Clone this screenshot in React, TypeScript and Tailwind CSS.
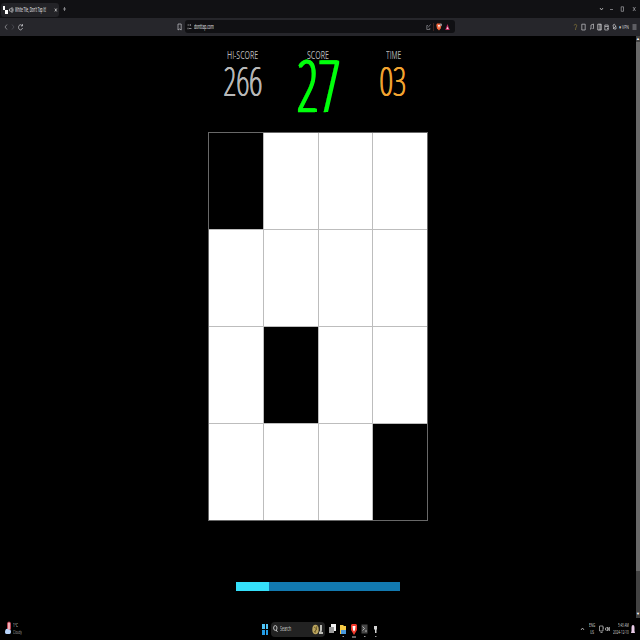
import { useLayoutEffect, useRef, useState } from "react";
import type { ReactNode } from "react";

// A single line of text condensed or stretched to an exact width.
function Fit({ w, className = "", children }: { w: number; className?: string; children: ReactNode }) {
  const ref = useRef<HTMLSpanElement>(null);
  const [s, setS] = useState(1);
  useLayoutEffect(() => {
    if (ref.current) setS(w / ref.current.offsetWidth);
  }, [w]);
  return (
    <span className={`block shrink-0 ${className}`} style={{ width: w }}>
      <span ref={ref} className="inline-block origin-left whitespace-nowrap" style={{ transform: `scaleX(${s})` }}>
        {children}
      </span>
    </span>
  );
}

function Icon({ d, w = 5, color = "#a3a3a8", fill = "none", className = "" }: { d: string; w?: number; color?: string; fill?: string; className?: string }) {
  return (
    <svg width={w} height="8" viewBox={`0 0 ${w} 8`} fill={fill} stroke={color} strokeWidth="0.7" className={`shrink-0 ${className}`}>
      <path d={d} />
    </svg>
  );
}

function TabBar() {
  return (
    <div className="flex h-[18px] items-center bg-[#111114]">
      <div className="ml-px mt-px flex h-[14px] w-[58px] items-center rounded-[3px] bg-[#232327]">
        <svg width="5" height="8" viewBox="0 0 5 8" className="ml-[2px]">
          <path d="M0 0h2v4H0zM2 4h3v4H2z" fill="#fff" />
        </svg>
        <Icon d="M0.5 3h1l1.5-1.500v5L1.500 5h-1zM4 2.500v3" w={5} color="#ddd" className="ml-[1px]" />
        <Fit w={31} className="ml-px text-[6.5px] font-medium leading-[8px] text-[#f4f4f6]">White Tile, Don't Tap It!</Fit>
        <Icon d="M0.800 2.500l2 3M2.800 2.500l-2 3" w={4} className="ml-[8px]" color="#ddd" />
      </div>
      <Icon d="M2.500 2v4M1 4h3" className="ml-[3px]" />
      <div className="ml-auto flex pr-[3px]">
        <Icon d="M1 3l1.500 2 1.500-2" className="mr-[5px]" color="#ddd" />
        <Icon d="M1 4.500h3" className="mr-[6px]" />
        <Icon d="M1.200 1.800h2.300v4.500H1.200z" className="mr-[7px]" />
        <Icon d="M1 2l2.500 4M3.500 2L1 6" />
      </div>
    </div>
  );
}

function Toolbar() {
  return (
    <div className="flex h-[18px] items-center bg-[#26262b] pb-px">
      <Icon d="M4 1.500L2 4l2 2.500" className="ml-[3px]" />
      <Icon d="M1 1.500L3 4l-2 2.500" color="#55555c" className="ml-[3px]" />
      <Icon d="M4.300 3A2 2.600 0 1 0 4.500 5M4.500 1v2H3" className="ml-[2px]" color="#d0d0d4" />
      <Icon d="M1 1h3.200v6L2.600 6 1 7z" className="ml-[154px]" color="#c4c4c8" />
      <div className="ml-[3px] flex h-[13px] w-[270px] items-center rounded-[3px] bg-[#101013]">
        <Icon d="M0.500 2h2M3.500 1.200v1.600M2 5.500h2.500M1 4.700v1.600" className="ml-[2px]" color="#b8b8bc" />
        <Fit w={20} className="ml-[2px] text-[6.5px] font-medium leading-[8px] text-[#e4e4e8]">donttap.com</Fit>
        <Icon d="M2 2.500H0.800v4h3V5M2 4.500l2.500-3" className="ml-auto" color="#909096" />
        <div className="mx-[2px] h-[8px] w-px bg-[#3c2420]" />
        <svg width="6" height="8" viewBox="0 0 6 8">
          <path d="M1 0.500h3.500l1 1.500L4.700 5.500 3 7.500 1 5.500 0.300 2z" fill="#f0643a" />
          <path d="M2 2h2l-1 3z" fill="#fff" />
          <circle cx="5" cy="1.800" r="1.200" fill="#8d8d94" />
        </svg>
        <svg width="5" height="8" viewBox="0 0 5 8" className="ml-[3px] mr-[5px]">
          <path d="M2.500 1L4.700 7H0.300z" fill="#c3265e" />
          <path d="M2.500 3.500L3.500 6h-2z" fill="#f4dce8" />
        </svg>
      </div>
      <div className="ml-auto flex items-center pr-[3px]">
        <Icon d="M1.200 2.500c0-1.500 2.500-1.500 2.500 0S2.500 4 2.500 7" color="#8d7d3c" className="mr-[3px]" />
        <Icon d="M0.800 1.200h3.400v5.800H0.800z" color="#c8c8cc" className="mr-[3px]" />
        <Icon d="M2 6V2l2.500-1v4.500M1 6h1M3.500 5.500h1" color="#c8c8cc" className="mr-[3px]" />
        <Icon d="M0.800 1.200h3.400v5.800H0.800zM3 1v6" color="#e8e8ea" className="mr-[2px]" />
        <Icon d="M0.800 2h3.400v5H0.800zM1 3.500h3.500M3 5.500h1.500" color="#c8c8cc" className="mr-[3px]" />
        <Icon d="M1 2l1.500-.8L4 4v2H1.800zM1 6l3-3" color="#c8c8cc" className="mr-[2px]" />
        <Fit w={10} className="text-[6px] leading-[8px] text-[#d0d0d4]">● VPN</Fit>
        <Icon d="M0.500 2h4M0.500 4h4M0.500 6h4" color="#c8c8cc" className="ml-[3px]" />
      </div>
    </div>
  );
}

const TILES = [
  [1, 0, 0, 0],
  [0, 0, 0, 0],
  [0, 1, 0, 0],
  [0, 0, 0, 1],
];

function Board() {
  return (
    <div className="ml-[208px] mt-[15px] grid w-[220px] grid-cols-[54px_54px_53px_54px] grid-rows-[repeat(4,96px)] gap-px border border-[#686868] bg-[#bdbdbd]">
      {TILES.flat().map((t, i) => (
        <div key={i} className={t ? "bg-black" : "bg-white"} />
      ))}
    </div>
  );
}

function Game() {
  return (
    <div className="flex h-[582px] bg-black">
      <div className="flex w-[636px] flex-col">
        <div className="flex h-[81px] font-light">
          <div className="ml-[223px] w-[40px] text-[#b8b8b8]">
            <Fit w={31} className="ml-[4px] mt-[11px] text-[11.5px] font-normal leading-[16px]">HI-SCORE</Fit>
            <Fit w={39} className="text-[40px] leading-[36px] [text-shadow:1.5px_0_currentColor,0.7px_0_currentColor]">266</Fit>
          </div>
          <div className="ml-[33px] w-[45px]">
            <Fit w={22} className="ml-[11px] mt-[11px] text-[11.5px] font-normal leading-[16px] text-[#b8b8b8]">SCORE</Fit>
            <Fit w={43} className="-mt-[13px] text-[71px] leading-[70px] text-[#00ff0c] [-webkit-text-stroke:0.6px_currentColor] [text-shadow:1px_0_currentColor,2px_0_currentColor,3px_0_currentColor,4px_0_currentColor]">27</Fit>
          </div>
          <div className="ml-[38px] w-[28px]">
            <Fit w={15} className="ml-[7px] mt-[11px] text-[11.5px] font-normal leading-[16px] text-[#b8b8b8]">TIME</Fit>
            <Fit w={27} className="text-[40px] leading-[36px] text-[#f2a531] [text-shadow:1.5px_0_currentColor,0.7px_0_currentColor]">03</Fit>
          </div>
        </div>
        <Board />
        <div className="ml-[236px] mt-[61px] flex h-[9px] w-[164px] bg-[#1279b0]">
          <div className="w-[32.500px] bg-[#35e0fa]" />
        </div>
      </div>
      <div className="flex w-[4px] flex-col items-center bg-[#424242]">
        <div className="h-[6px] text-[4px] leading-[6px] text-white">▲</div>
        <div className="h-[529px] w-full bg-[#686868]" />
        <div className="mt-auto h-[7px] text-[4px] leading-[6px] text-white">▼</div>
      </div>
    </div>
  );
}

function Taskbar() {
  return (
    <div className="flex h-[22px] items-center bg-black text-[#d4d4d4]">
      <svg width="7" height="14" viewBox="0 0 7 14" className="-mt-[2px] ml-[5px]">
        <rect x="2.500" y="1" width="3" height="8" rx="1.500" fill="#f3aeb6" stroke="#d94155" strokeWidth="0.7" />
        <path d="M0 11c0-3 2-4 3-3s3 0 3 2.500-1 2.500-3 2.500-3 0-3-2z" fill="#b9d5fb" />
      </svg>
      <div className="ml-px w-[12px] text-[5.5px] leading-[7px]">
        <Fit w={5}>1°C</Fit>
        <Fit w={9} className="text-[#a0a0a0]">Cloudy</Fit>
      </div>
      <div className="ml-[237px] grid h-[11px] w-[6px] grid-cols-2 gap-px">
        <div className="bg-[#4fc4f7]" />
        <div className="bg-[#4fc4f7]" />
        <div className="bg-[#239be5]" />
        <div className="bg-[#239be5]" />
      </div>
      <div className="ml-[3px] flex h-[15px] w-[54px] items-center rounded-[4px] bg-[#222222]">
        <svg width="5" height="8" viewBox="0 0 5 8" className="ml-[2px]" fill="none" stroke="#e6e6e6" strokeWidth="0.8">
          <ellipse cx="2.300" cy="3" rx="1.700" ry="2.400" />
          <path d="M3.200 5l1.300 2" />
        </svg>
        <Fit w={11} className="ml-[2px] text-[7px] leading-[10px]">Search</Fit>
        <svg width="11" height="11" viewBox="0 0 11 11" className="ml-auto mr-[2px]">
          <ellipse cx="3.500" cy="5.500" rx="3.200" ry="4.800" fill="#baa45d" />
          <path d="M2 3l3 2-3 3M5 2l-2 7" stroke="#665527" strokeWidth="0.8" fill="none" />
          <path d="M8 1h2v5l-.5 2H11v2H7V8l1-1z" fill="#bcbcb5" />
        </svg>
      </div>
      <svg width="7" height="12" viewBox="0 0 7 12" className="ml-[4px]">
        <rect x="2" y="1" width="5" height="7" fill="#f2f2f2" />
        <rect x="0" y="4" width="5" height="6" fill="#9c9c9c" />
      </svg>
      <svg width="8" height="16" viewBox="0 0 8 16" className="ml-[3px]">
        <path d="M1 4h3l1 1h2v8H1z" fill="#f6ca45" />
        <path d="M2 9h5v4H2z" fill="#4a98dc" />
        <path d="M3.500 15.500h1.500" stroke="#999" />
      </svg>
      <svg width="8" height="18" viewBox="0 0 8 18" className="ml-[3px]">
        <path d="M1 5l1-1h4l1 1v5l-3 5-3-5z" fill="#f2392b" />
        <path d="M2.500 6h3L5 10l-1 1.500L3 10z" fill="#fff" />
        <path d="M2 17h4" stroke="#c8c8c8" />
      </svg>
      <svg width="7" height="16" viewBox="0 0 7 16" className="ml-[3px]">
        <rect x="0.500" y="3.500" width="6" height="9" fill="#484848" />
        <path d="M1.500 5.500l2 2-2 2M4 10h2" stroke="#ddd" strokeWidth="0.700" fill="none" />
        <path d="M3 15.500h1.500" stroke="#999" />
      </svg>
      <svg width="5" height="16" viewBox="0 0 5 16" className="ml-[5px]">
        <path d="M1 5h3v3.500H3.500V12H2V8.500H1z" fill="#d4d4d4" />
        <path d="M2 15.500h1.500" stroke="#999" />
      </svg>
      <div className="ml-auto flex items-center pr-[5px] text-[5.5px] leading-[7px]">
        <Icon d="M1 5l1.500-2L4 5" color="#ddd" className="mr-[4px]" />
        <div className="mr-[4px] flex w-[6px] flex-col items-center">
          <Fit w={6}>ENG</Fit>
          <Fit w={4}>US</Fit>
        </div>
        <Icon d="M0.500 1h3.500v5H0.500zM1.500 7.500h2M4 3h1" color="#c8c8c8" className="mr-px" />
        <Icon d="M0.500 3h1l1-1v4l-1-1h-1zM3.500 2.500v3M4.500 2v4" color="#c8c8c8" className="mr-[3px]" />
        <div className="mr-[2px] flex flex-col items-end">
          <Fit w={11}>5:43 AM</Fit>
          <Fit w={16}>2024-12-10</Fit>
        </div>
        <svg width="4" height="9" viewBox="0 0 4 9">
          <path d="M2 0c1 0 1.500 1 1.500 3v3L4 8H0l.5-2V3C.5 1 1 0 2 0z" fill="#e9cbe8" />
        </svg>
      </div>
    </div>
  );
}

export default function App() {
  return (
    <div className="h-[640px] w-[640px] overflow-hidden bg-black font-['Open_Sans','Noto_Sans',sans-serif]">
      <TabBar />
      <Toolbar />
      <Game />
      <Taskbar />
    </div>
  );
}
